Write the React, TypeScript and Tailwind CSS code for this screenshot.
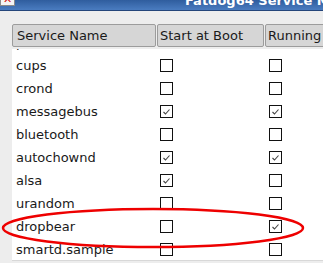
import React from "react"

type Service = {
  name: string
  boot: boolean
  running: boolean
}

const services: Service[] = [
  { name: "pulseaudio", boot: false, running: false },
  { name: "cups", boot: false, running: false },
  { name: "crond", boot: false, running: false },
  { name: "messagebus", boot: true, running: true },
  { name: "bluetooth", boot: false, running: false },
  { name: "autochownd", boot: true, running: true },
  { name: "alsa", boot: true, running: false },
  { name: "urandom", boot: false, running: false },
  { name: "dropbear", boot: false, running: true },
  { name: "smartd.sample", boot: false, running: false },
]

function Check({ on }: { on: boolean }) {
  return (
    <div className="w-[13px] h-[13px] border border-[#111] bg-white">
      {on && (
        <svg width="11" height="11" viewBox="0 0 11 11" className="block">
          <path d="M2.5 6 L4.5 8 L8.5 3.5" fill="none" stroke="#444" strokeWidth="1.1" />
        </svg>
      )}
    </div>
  )
}

export default function App() {
  return (
    <div
      className="relative w-[323px] h-[263px] overflow-hidden bg-[#ededed] text-[13px] text-[#1a1a1a]"
      style={{ fontFamily: '"DejaVu Sans", sans-serif' }}
    >
      {/* window title bar, mostly cut off at the top */}
      <div className="relative h-[11px] bg-gradient-to-b from-[#2f5d9e] to-[#4a7cc0] border-b border-[#24457a] overflow-hidden">
        <div className="absolute left-0 top-[-9px] w-[15px] h-[15px] bg-[#f4f4f4] border border-[#8a8a8a] flex items-end justify-center">
          <span className="text-[#d01010] text-[11px] leading-[10px] font-bold">✕</span>
        </div>
        <div className="absolute left-[185px] top-[-7px] whitespace-nowrap font-bold text-white text-[13px] leading-[15px]">
          Fatdog64 Service Manager
        </div>
      </div>

      <div className="pl-[12px] pt-[13px]">
        {/* column headers */}
        <div className="flex h-[23px]">
          <div className="w-[144px] shrink-0 border border-[#9c9c9c] rounded-[2px] bg-[#d6d6d6] pl-[4px] flex items-center">
            Service Name
          </div>
          <div className="w-[107px] ml-[1px] shrink-0 border border-[#9c9c9c] rounded-[2px] bg-[#d6d6d6] pl-[2px] flex items-center">
            Start at Boot
          </div>
          <div className="w-[80px] ml-[1px] shrink-0 border border-[#9c9c9c] rounded-[2px] bg-[#d6d6d6] pl-[2px] flex items-center">
            Running
          </div>
        </div>

        {/* scrolled list */}
        <div className="mt-[2px] h-[212px] bg-white overflow-hidden border-b border-[#d8d8d8]">
          <div className="mt-[-18px]">
            {services.map((s) => (
              <div key={s.name} className="flex items-center h-[23px]">
                <div className="w-[148px] shrink-0 pl-[4px] leading-[23px]">{s.name}</div>
                <div className="w-[109px] shrink-0">
                  <Check on={s.boot} />
                </div>
                <div>
                  <Check on={s.running} />
                </div>
              </div>
            ))}
          </div>
        </div>
      </div>

      {/* red highlight ellipse drawn over the list */}
      <svg className="absolute left-0 top-0 pointer-events-none" width="323" height="263">
        <ellipse cx="153" cy="228" rx="150" ry="19" fill="none" stroke="#ee0000" strokeWidth="2.5" />
      </svg>
    </div>
  )
}
